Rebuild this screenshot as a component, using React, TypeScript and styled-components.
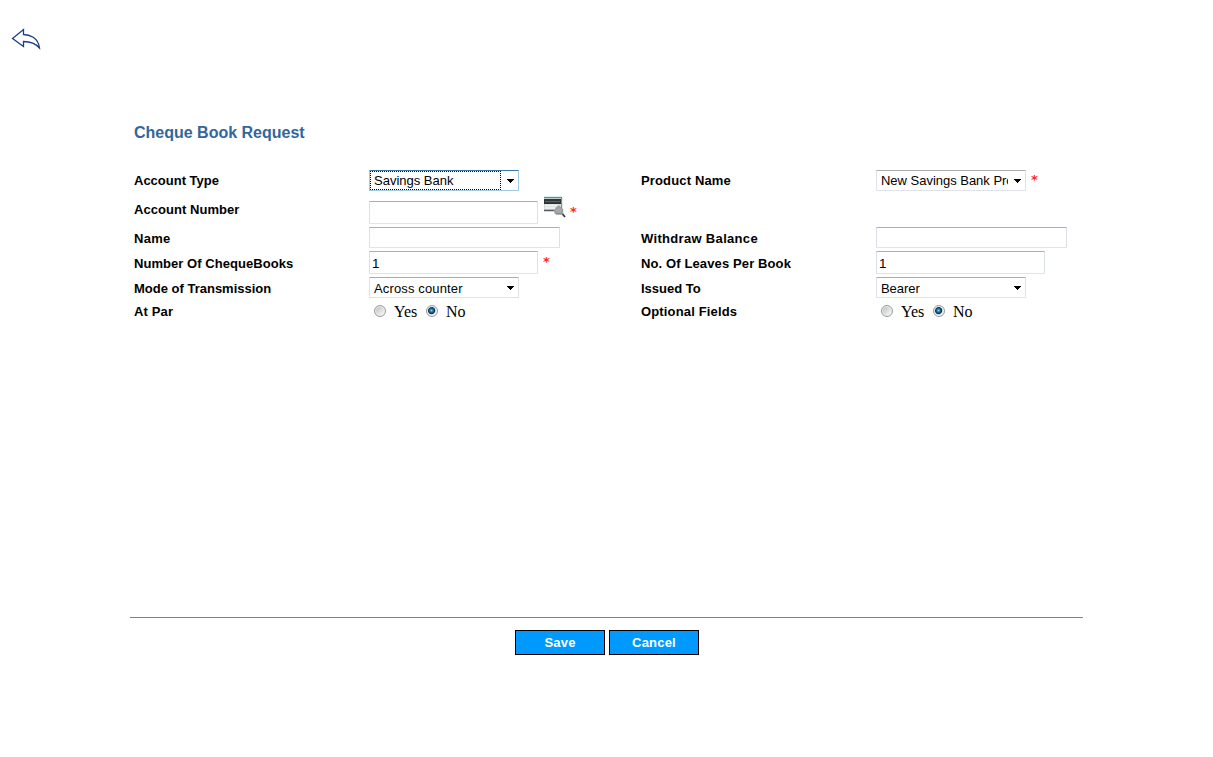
import React from "react";
import styled, { createGlobalStyle } from "styled-components";

const GlobalStyle = createGlobalStyle`
  * { box-sizing: border-box; }
  body { margin: 0; background: #fff; color: #000; font-family: "Liberation Sans", Arial, sans-serif; }
`;

const Page = styled.div`
  height: 757px;
  display: flex;
  flex-direction: column;
  overflow: hidden;
`;

const TopBar = styled.header`
  height: 120px;
  padding: 28px 0 0 11px;
`;

const Main = styled.main`
  width: 953px;
  margin-left: 130px;
  display: flex;
  flex-direction: column;
`;

const Title = styled.h1`
  margin: 0;
  height: 48px;
  padding: 1px 0 0 4px;
  font-size: 16px;
  line-height: 24px;
  font-weight: bold;
  color: #336699;
`;

const Form = styled.div`
  height: 449px;
  padding-left: 4px;
  display: grid;
  grid-template-columns: 235px 272px 235px 1fr;
  grid-template-rows: 25px 33px 25px 25px 25px 21px;
`;

const Label = styled.label<{ $spacing?: number }>`
  align-self: center;
  font-size: 13px;
  font-weight: bold;
  line-height: 16px;
  white-space: nowrap;
  letter-spacing: ${(p) => p.$spacing ?? 0}px;
`;

const Field = styled.div<{ $top: number }>`
  display: flex;
  align-items: flex-start;
  padding-top: ${(p) => p.$top}px;
`;

const FieldDrop = styled.div`
  padding-top: 5px;
`;

const Input = styled.input<{ $wide?: boolean }>`
  display: block;
  width: ${(p) => (p.$wide ? 191 : 169)}px;
  height: ${(p) => (p.$wide ? 21 : 23)}px;
  margin: 0;
  padding: 1px 2px 0;
  border: 1px solid #e2e3ea;
  border-top-color: #abadb3;
  border-right-color: #dbdfe6;
  border-left-color: #dbdfe6;
  border-radius: 1px;
  outline: none;
  background: #fff;
  font: 13.33px "Liberation Sans", Arial, sans-serif;
`;

const SelectBox = styled.div<{ $focused?: boolean }>`
  width: 150px;
  height: 21px;
  display: flex;
  border: 1px solid ${(p) => (p.$focused ? "#a4c9e3" : "#dfe2e9")};
  border-top-color: ${(p) => (p.$focused ? "#3d7bad" : "#abadb3")};
  border-radius: 1px;
`;

const SelectText = styled.div<{ $focused?: boolean; $spacing?: number; $drop?: number }>`
  width: ${(p) => (p.$focused ? 131 : 132)}px;
  padding: ${(p) => p.$drop ?? 0}px 0 0 3px;
  border: 1px dotted ${(p) => (p.$focused ? "#000" : "transparent")};
  font-size: 13px;
  line-height: 17px;
  white-space: nowrap;
  overflow: hidden;
  letter-spacing: ${(p) => p.$spacing ?? 0}px;
`;

const Arrow = styled.svg`
  margin: 8px 4px 0 auto;
`;

const Required = styled.span<{ $left: number; $top: number }>`
  height: 16px;
  margin: ${(p) => p.$top}px 0 0 ${(p) => p.$left}px;
  font: bold 13px/16px "DejaVu Sans", sans-serif;
  color: #ff2a1a;
`;

const LookupIcon = styled.svg`
  margin: 0 0 0 5px;
`;

const ChoiceRow = styled.div`
  display: flex;
  padding-left: 5px;
`;

const Choice = styled.span`
  width: 52px;
  height: 20px;
  display: flex;
  align-items: flex-start;
  gap: 8px;
  font: 16px/22px "Liberation Serif", "Times New Roman", serif;
`;

const Radio = styled.span<{ $checked?: boolean }>`
  width: 12px;
  height: 12px;
  margin-top: 4px;
  border: 1px solid #9a9b9b;
  border-radius: 50%;
  background: ${(p) =>
    p.$checked
      ? "radial-gradient(circle at 45% 45%, #7ed6f5 0, #1c6a9d 1.8px, #10304f 3.2px, #e8eaec 4.2px, #f4f4f4 100%)"
      : "linear-gradient(135deg, #b5b9be, #f6f6f6 85%)"};
  box-shadow: inset 0 0 0 1px #f0f0f0;
`;

const Footer = styled.footer`
  border-top: 1px solid #808080;
  padding-top: 12px;
  display: flex;
  justify-content: center;
  gap: 4px;
`;

const Button = styled.button`
  width: 90px;
  height: 25px;
  padding: 0 0 0 1px;
  border: 1px solid #000;
  background: #0099ff;
  color: #fff;
  font: bold 13px "Liberation Sans", Arial, sans-serif;
  letter-spacing: 0.2px;
`;

type SelectProps = { text: string; focused?: boolean; spacing?: number; drop?: number };

const Select = ({ text, focused, spacing, drop }: SelectProps) => (
  <SelectBox $focused={focused}>
    <SelectText $focused={focused} $spacing={spacing} $drop={drop}>{text}</SelectText>
    <Arrow width="7" height="4" viewBox="0 0 7 4" shapeRendering="crispEdges">
      <path d="M0 0H7V1H6V2H5V3H4V4H3V3H2V2H1V1H0Z" />
    </Arrow>
  </SelectBox>
);

const YesNo = () => (
  <Field $top={0}>
    <ChoiceRow>
      <Choice><Radio />Yes</Choice>
      <Choice><Radio $checked />No</Choice>
    </ChoiceRow>
  </Field>
);

export default function App() {
  return (
    <Page>
      <GlobalStyle />
      <TopBar>
        <svg width="31" height="23" viewBox="0 0 31 23" fill="none" stroke="#1b3c87" strokeWidth="1.3">
          <path d="M1.500 10.500L12.500 1.500V6.500C18 6.500 27.500 9.500 28.500 20C25 16 20 13.500 12.500 13.500V18.500Z" />
        </svg>
      </TopBar>
      <Main>
        <Title>Cheque Book Request</Title>
        <Form>
          <Label>Account Type</Label>
          <Field $top={2}><Select text="Savings Bank" focused /></Field>
          <Label $spacing={0.15}>Product Name</Label>
          <Field $top={2}>
            <Select text="New Savings Bank Pro" spacing={-0.02} />
            <Required $left={5} $top={2}>*</Required>
          </Field>

          <Label $spacing={0.05}>Account Number</Label>
          <Field $top={3}>
            <FieldDrop><Input /></FieldDrop>
            <LookupIcon width="24" height="24" viewBox="0 0 24 24">
              <path d="M1 1.500H19.500V15H1Z" fill="#d5d9d9" />
              <path d="M1 1.500H19" stroke="#27a3a0" strokeWidth="1.300" />
              <path d="M1 3H18V8H1Z" fill="#303536" />
              <path d="M2 5.500H17" stroke="#596467" />
              <path d="M2 9.500H16M2 12H12" stroke="#f4f6f6" strokeWidth="1.500" />
              <path d="M1 14.500H11" stroke="#555b5d" strokeWidth="1.500" />
              <path d="M18.500 2V12" stroke="#858d8f" />
              <path d="M15.500 10L19.500 13.500V17.500H12.500L11.500 14.500Z" fill="#a5a9a9" stroke="#9a9f9f" strokeWidth="1.500" strokeLinejoin="round" />
              <path d="M13 18H19" stroke="#7c8282" />
              <path d="M19.500 18L22 21" stroke="#343a3a" strokeWidth="1.800" />
            </LookupIcon>
            <Required $left={3} $top={8}>*</Required>
          </Field>
          <span />
          <span />

          <Label $spacing={0.3}>Name</Label>
          <Field $top={1}><Input $wide /></Field>
          <Label $spacing={0.32}>Withdraw Balance</Label>
          <Field $top={1}><Input $wide /></Field>

          <Label $spacing={0.05}>Number Of ChequeBooks</Label>
          <Field $top={0}><Input defaultValue="1" /><Required $left={5} $top={3}>*</Required></Field>
          <Label $spacing={0.12}>No. Of Leaves Per Book</Label>
          <Field $top={0}><Input defaultValue="1" /></Field>

          <Label>Mode of Transmission</Label>
          <Field $top={1}><Select text="Across counter" spacing={0.14} drop={1} /></Field>
          <Label>Issued To</Label>
          <Field $top={1}><Select text="Bearer" drop={1} spacing={-0.05} /></Field>

          <Label $spacing={0.15}>At Par</Label>
          <YesNo />
          <Label $spacing={0.15}>Optional Fields</Label>
          <YesNo />
        </Form>
        <Footer>
          <Button>Save</Button>
          <Button>Cancel</Button>
        </Footer>
      </Main>
    </Page>
  );
}
